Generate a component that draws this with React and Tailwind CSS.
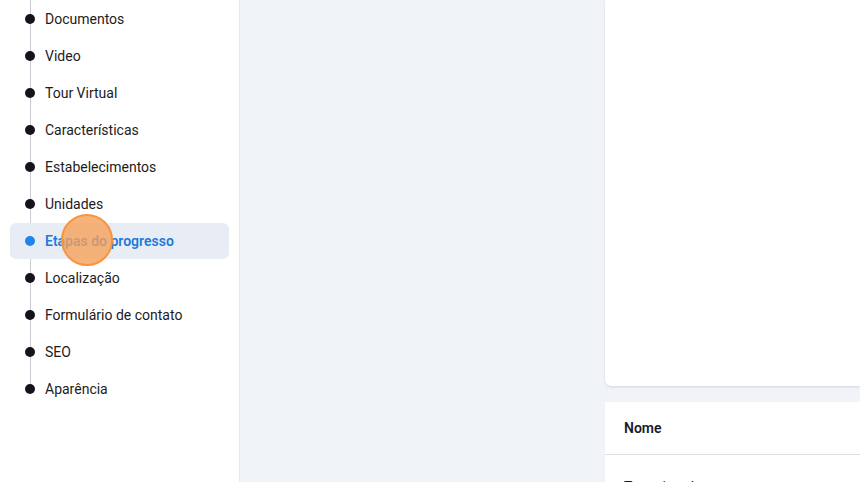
const items = [
  'Documentos',
  'Video',
  'Tour Virtual',
  'Características',
  'Estabelecimentos',
  'Unidades',
  'Etapas do progresso',
  'Localização',
  'Formulário de contato',
  'SEO',
  'Aparência',
]

const active = 'Etapas do progresso'

export default function App() {
  return (
    <div
      className="relative flex h-[482px] w-[860px] overflow-hidden bg-[#f0f3f8]"
      style={{ fontFamily: 'Roboto, "Liberation Sans", sans-serif' }}
    >
      <aside className="relative h-full w-[240px] shrink-0 border-r border-[#e6e8ec] bg-white">
        <div className="absolute left-[30px] top-0 h-[389px] w-px bg-[#c9ccd2]"></div>
        <ul className="relative flex flex-col gap-px px-[10px] pt-px">
          {items.map((label) => {
            const isActive = label === active
            return (
              <li
                key={label}
                className={`flex h-[36px] items-center gap-[10px] rounded-md pl-[15px] text-[14px] ${
                  isActive ? 'bg-[#e8edf5] font-semibold text-[#1f7ad9]' : 'text-[#1d1b22]'
                }`}
              >
                <span
                  className={`h-[10px] w-[10px] rounded-full ${isActive ? 'bg-[#1f85ec]' : 'bg-[#17131c]'}`}
                ></span>
                {label}
              </li>
            )
          })}
        </ul>
        <div className="absolute left-[61px] top-[214px] h-[52px] w-[52px] rounded-full border-2 border-[#f5963c] bg-[#f6a05a]/80"></div>
      </aside>

      <main className="flex flex-1 pl-[365px]">
        <div className="flex flex-1 flex-col gap-[16px]">
          <div className="h-[386px] shrink-0 rounded-bl-md bg-white shadow-sm"></div>
          <div className="flex-1 bg-white">
            <div className="flex h-[53px] items-center border-b border-[#dcdfe4] px-[19px] text-[14px] font-semibold text-[#1b1b1f]">
              Nome
            </div>
            <div className="px-[19px] pt-[22px] text-[14px] text-[#1b1b1f]">Tour virtual</div>
          </div>
        </div>
      </main>
    </div>
  )
}
